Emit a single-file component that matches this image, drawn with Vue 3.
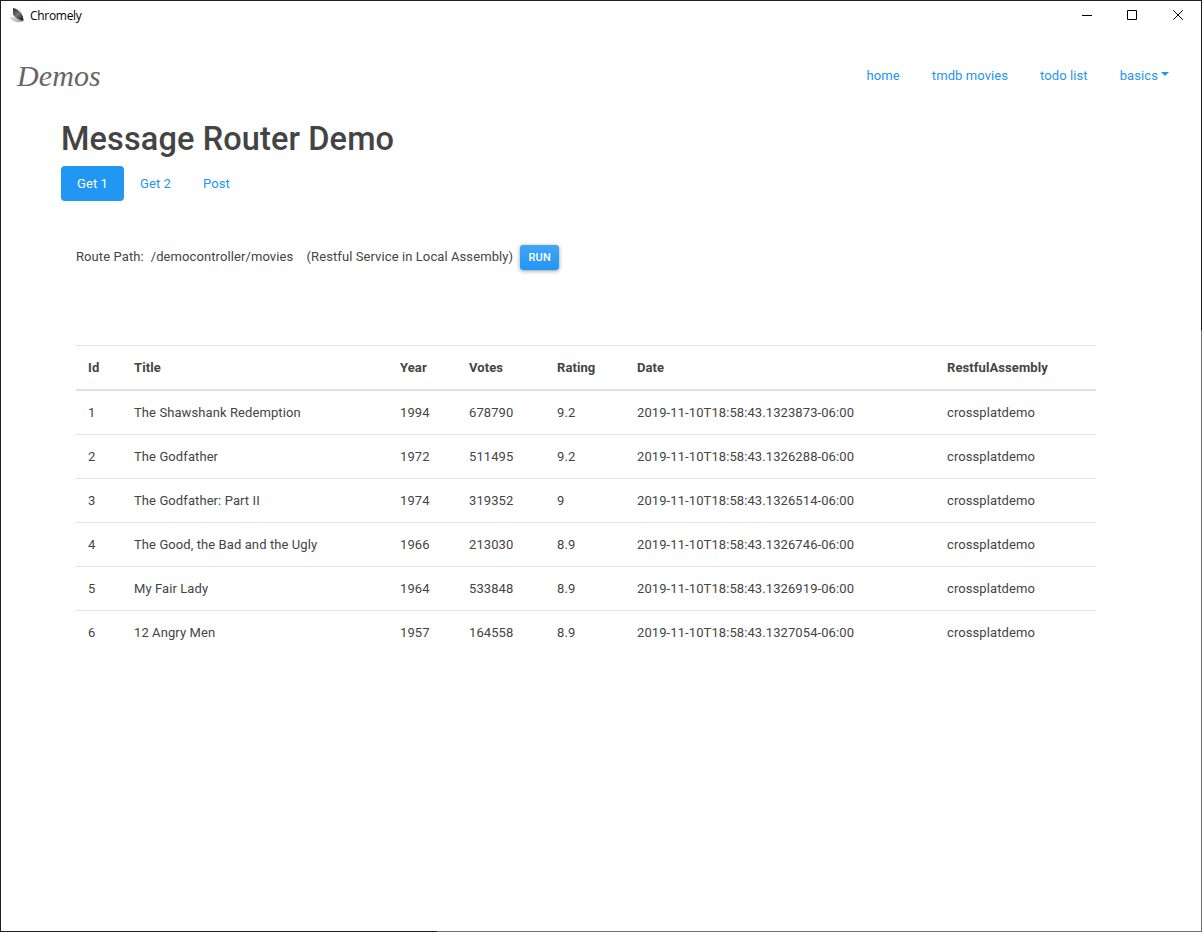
<script setup>
const links = ['home', 'tmdb movies', 'todo list']
const tabs = ['Get 1', 'Get 2', 'Post']
const columns = ['Id', 'Title', 'Year', 'Votes', 'Rating', 'Date', 'RestfulAssembly']
const movies = [
  [1, 'The Shawshank Redemption', 1994, 678790, 9.2, '2019-11-10T18:58:43.1323873-06:00', 'crossplatdemo'],
  [2, 'The Godfather', 1972, 511495, 9.2, '2019-11-10T18:58:43.1326288-06:00', 'crossplatdemo'],
  [3, 'The Godfather: Part II', 1974, 319352, 9, '2019-11-10T18:58:43.1326514-06:00', 'crossplatdemo'],
  [4, 'The Good, the Bad and the Ugly', 1966, 213030, 8.9, '2019-11-10T18:58:43.1326746-06:00', 'crossplatdemo'],
  [5, 'My Fair Lady', 1964, 533848, 8.9, '2019-11-10T18:58:43.1326919-06:00', 'crossplatdemo'],
  [6, '12 Angry Men', 1957, 164558, 8.9, '2019-11-10T18:58:43.1327054-06:00', 'crossplatdemo'],
]
</script>

<template>
  <div class="window">
    <header class="titlebar">
      <svg class="logo" width="16" height="16" viewBox="0 0 16 16">
        <defs>
          <linearGradient id="wing" x1="0" y1="0" x2="0.7" y2="1">
            <stop offset="0" stop-color="#2a2a2a" />
            <stop offset="0.55" stop-color="#777" />
            <stop offset="1" stop-color="#222" />
          </linearGradient>
          <linearGradient id="tail" x1="0" y1="0" x2="1" y2="0">
            <stop offset="0" stop-color="#e4e4e4" />
            <stop offset="1" stop-color="#999" />
          </linearGradient>
        </defs>
        <path d="M0.300 10C5 9.500 10 11 14.300 14.300C9 16.500 2.500 15 0.300 10Z" fill="url(#tail)" />
        <path d="M4 1C10 2 14.600 7 14.500 14C10 13 5.500 10.500 4.100 7.500Z" fill="url(#wing)" />
      </svg>
      <span class="app-name">Chromely</span>
      <div class="controls">
        <svg width="46" height="29" viewBox="0 0 46 29"><path d="M18 14.500h10" /></svg>
        <svg width="46" height="29" viewBox="0 0 46 29"><path d="M17.500 9.500h9v9h-9z" /></svg>
        <svg width="46" height="29" viewBox="0 0 46 29"><path d="M17.200 9.200l9.600 9.600M26.800 9.200l-9.600 9.600" /></svg>
      </div>
    </header>
    <nav class="navbar">
      <a class="brand">Demos</a>
      <div class="links">
        <a v-for="l in links" :key="l">{{ l }}</a>
        <a>basics<i class="caret"></i></a>
      </div>
    </nav>
    <main class="content">
      <h1>Message Router Demo</h1>
      <div class="tabs">
        <a v-for="(t, i) in tabs" :key="t" :class="{ active: i === 0 }">{{ t }}</a>
      </div>
      <section class="panel">
        <div class="route">
          <span class="label">Route Path:</span>
          <span class="path">/democontroller/movies</span>
          <span class="note">(Restful Service in Local Assembly)</span>
          <button>RUN</button>
        </div>
        <table>
          <colgroup>
            <col class="c-id" /><col class="c-title" /><col class="c-year" /><col class="c-votes" />
            <col class="c-rating" /><col class="c-date" /><col />
          </colgroup>
          <thead>
            <tr><th v-for="c in columns" :key="c">{{ c }}</th></tr>
          </thead>
          <tbody>
            <tr v-for="m in movies" :key="m[0]">
              <td v-for="(v, i) in m" :key="i">{{ v }}</td>
            </tr>
          </tbody>
        </table>
      </section>
    </main>
  </div>
</template>

<style>
body { margin: 0; background: #fff; }
</style>

<style scoped>
* { box-sizing: border-box; }
/* The window edge turns lighter part way along the right and bottom sides. */
.window {
  height: 932px;
  overflow: hidden;
  padding: 1px;
  background:
    linear-gradient(#1f1d20, #1f1d20) 0 0 / 100% 1px no-repeat,
    linear-gradient(#1f1d20, #1f1d20) 0 0 / 1px 100% no-repeat,
    linear-gradient(#1f1d20 330px, #707070 330px) 100% 0 / 1px 100% no-repeat,
    linear-gradient(90deg, #1f1d20 437px, #707070 437px) 0 100% / 100% 1px no-repeat,
    #fff;
  color: #444;
  font: 13px/19.5px Roboto, sans-serif;
  letter-spacing: 0.09px;
}
.titlebar { display: flex; height: 29px; padding-left: 8px; }
.logo { margin-top: 6px; }
.app-name {
  margin: 5px 0 0 5px;
  color: #000;
  font: 12px/20px "Open Sans", "Noto Sans", sans-serif;
  letter-spacing: -0.3px;
}
.controls { display: flex; margin: 0 -1px 0 auto; }
.controls path { fill: none; stroke: #000; stroke-width: 1; }
.navbar {
  display: flex;
  align-items: center;
  justify-content: space-between;
  height: 92px;
  padding: 0 16px;
}
.brand {
  color: #666;
  font: italic 30px/40px "Liberation Serif", serif;
}
.links { display: flex; color: #2196f3; }
.links a { padding: 0 16px; }
.caret {
  display: inline-block;
  margin-left: 3px;
  vertical-align: 4px;
  border: 4px solid transparent;
  border-top-color: #2196f3;
  border-bottom: 0;
}
.content { margin-top: -3px; padding: 0 60px; }
h1 { margin: 0 0 7px; font-size: 32.5px; line-height: 40px; font-weight: 500; letter-spacing: 0.12px; }
.tabs { display: flex; }
.tabs a { height: 35px; padding: 8px 16px; color: #2196f3; }
.tabs .active { background: #2196f3; color: #fff; border-radius: 4px; }
.panel { padding: 44px 15px 0; }
.route { display: flex; align-items: flex-start; height: 25px; line-height: 23px; }
.label { margin-right: 7px; }
.path { margin-right: 13.3px; }
.note { margin-right: 7px; }
button {
  width: 39px;
  height: 25px;
  padding: 0;
  border: 0;
  border-radius: 3px;
  background: linear-gradient(#42a5f5, #2196f3);
  box-shadow: 0 1px 4px rgba(0, 0, 0, 0.4);
  color: #fff;
  font: 500 11px/25px Roboto, sans-serif;
  letter-spacing: 0.2px;
}
table {
  width: 1020px;
  margin-top: 75px;
  table-layout: fixed;
  border-collapse: separate;
  border-spacing: 0;
}
.c-id { width: 46px; }
.c-title { width: 266px; }
.c-year { width: 69px; }
.c-votes { width: 88px; }
.c-rating { width: 80px; }
.c-date { width: 310px; }
th, td { height: 44px; padding: 0 12px; border-top: 1px solid #dee2e6; text-align: left; }
th { height: 46px; border-bottom: 2px solid #dee2e6; font-weight: 700; }
tbody tr:first-child td { height: 43px; border-top: 0; }
</style>
